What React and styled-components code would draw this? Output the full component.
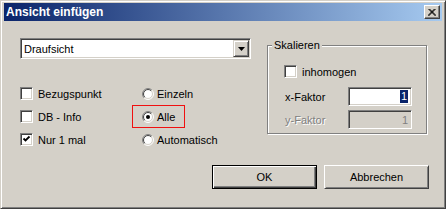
import React from "react";
import styled, { createGlobalStyle, css } from "styled-components";

const GlobalStyle = createGlobalStyle`
  html, body {
    margin: 0;
    padding: 0;
    background: #d4d0c8;
  }
  body {
    font-family: "Liberation Sans", Arial, sans-serif;
    font-size: 11px;
    color: #000;
  }
`;

const sunken = css`
  border: 1px solid;
  border-color: #808080 #fff #fff #808080;
  box-shadow: inset 1px 1px #404040, inset -1px -1px #d4d0c8;
`;

const Window = styled.div`
  box-sizing: border-box;
  width: 446px;
  height: 209px;
  display: flex;
  flex-direction: column;
  padding: 2px 3px 3px 3px;
  background: #d4d0c8;
  border: 1px solid;
  border-color: #d4d0c8 #404040 #404040 #d4d0c8;
  box-shadow: inset 1px 1px #fff, inset -1px -1px #808080;
`;

const TitleBar = styled.div`
  height: 18px;
  display: flex;
  align-items: center;
  justify-content: space-between;
  padding: 0 2px;
  background: linear-gradient(to right, #0a246a, #a6caf0);
`;

const TitleText = styled.span`
  color: #fff;
  font-weight: bold;
  font-size: 12px;
  line-height: 18px;
`;

const CloseButton = styled.div`
  box-sizing: border-box;
  width: 16px;
  height: 14px;
  display: flex;
  align-items: center;
  justify-content: center;
  background: #d4d0c8;
  border: 1px solid;
  border-color: #fff #404040 #404040 #fff;
  box-shadow: inset -1px -1px #808080;
`;

const Body = styled.div`
  flex: 1;
  display: flex;
  flex-direction: column;
  padding: 17px 13px 0 16px;
`;

const TopSection = styled.div`
  display: flex;
  gap: 16px;
`;

const LeftCol = styled.div`
  width: 231px;
  display: flex;
  flex-direction: column;
`;

const Combo = styled.div`
  box-sizing: border-box;
  height: 21px;
  display: flex;
  align-items: center;
  background: #fff;
  ${sunken};
  padding: 1px;
`;

const ComboText = styled.span`
  flex: 1;
  padding-left: 2px;
`;

const DropButton = styled.div`
  box-sizing: border-box;
  width: 16px;
  height: 17px;
  display: flex;
  align-items: center;
  justify-content: center;
  background: #d4d0c8;
  border: 1px solid;
  border-color: #d4d0c8 #404040 #404040 #d4d0c8;
  box-shadow: inset 1px 1px #fff, inset -1px -1px #808080;
`;

const OptionsGrid = styled.div`
  margin-top: 28px;
  display: grid;
  grid-template-columns: 122px 1fr;
  row-gap: 10px;
`;

const Option = styled.label`
  position: relative;
  height: 13px;
  display: flex;
  align-items: center;
  gap: ${(p) => (p.$radio ? "3px" : "5px")};
  white-space: nowrap;
  color: ${(p) => (p.$disabled ? "#808080" : "#000")};

  ${(p) =>
    p.$highlight &&
    css`
      &::after {
        content: "";
        position: absolute;
        box-sizing: border-box;
        left: -10px;
        top: -5px;
        width: 53px;
        height: 23px;
        border: 1px solid #f01010;
      }
    `}
`;

const CheckBox = styled.span`
  box-sizing: border-box;
  width: 13px;
  height: 13px;
  flex: none;
  display: flex;
  align-items: center;
  justify-content: center;
  background: #fff;
  ${sunken};
`;

const GroupBox = styled.div`
  position: relative;
  box-sizing: border-box;
  width: 160px;
  height: 89px;
  margin-top: 7px;
  padding: 19px 14px 0 16px;
  border: 1px solid #808080;
  box-shadow: inset 1px 1px #fff, 1px 1px #fff;
  display: flex;
  flex-direction: column;
`;

const GroupLabel = styled.span`
  position: absolute;
  top: -7px;
  left: 4px;
  padding: 0 2px;
  line-height: 13px;
  background: #d4d0c8;
`;

const FieldRow = styled.div`
  display: flex;
  align-items: center;
  height: 19px;
  margin-top: ${(p) => p.$gap}px;
`;

const FieldLabel = styled.span`
  width: 64px;
  padding-left: 1px;
  color: ${(p) => (p.$disabled ? "#808080" : "#000")};
  text-shadow: ${(p) => (p.$disabled ? "1px 1px #fff" : "none")};
`;

const Field = styled.div`
  box-sizing: border-box;
  width: 64px;
  height: 19px;
  display: flex;
  align-items: center;
  justify-content: flex-end;
  padding-right: 3px;
  background: ${(p) => (p.$disabled ? "#d4d0c8" : "#fff")};
  color: ${(p) => (p.$disabled ? "#808080" : "#000")};
  ${sunken};
`;

const Selected = styled.span`
  background: #0a246a;
  color: #fff;
  padding: 0 1px;
  line-height: 13px;
`;

const ButtonRow = styled.div`
  margin-top: 19px;
  display: flex;
  justify-content: flex-end;
  gap: 7px;
`;

const Button = styled.div`
  box-sizing: border-box;
  width: 105px;
  height: 24px;
  display: flex;
  align-items: center;
  justify-content: center;
  background: #d4d0c8;
  border: 1px solid;
  ${(p) =>
    p.$default
      ? css`
          border-color: #000;
          box-shadow: inset 1px 1px #fff, inset -1px -1px #404040,
            inset -2px -2px #808080;
        `
      : css`
          border-color: #fff #404040 #404040 #fff;
          box-shadow: inset 1px 1px #d4d0c8, inset -1px -1px #808080;
        `}
`;

function Radio({ checked }) {
  const c = 6;
  const arc = (r, color, first) => {
    const a = r * 0.7071;
    const p1 = `${c - a},${c + a}`;
    const p2 = `${c + a},${c - a}`;
    const d = first
      ? `M${p1} A${r} ${r} 0 0 1 ${p2}`
      : `M${p2} A${r} ${r} 0 0 1 ${p1}`;
    return <path d={d} fill="none" stroke={color} strokeWidth="1" />;
  };
  return (
    <svg width="12" height="12" viewBox="0 0 12 12" style={{ flex: "none" }}>
      <circle cx="6" cy="6" r="5" fill="#fff" />
      {arc(5.5, "#808080", true)}
      {arc(5.5, "#fff", false)}
      {arc(4.5, "#404040", true)}
      {arc(4.5, "#d4d0c8", false)}
      {checked && <circle cx="6" cy="6" r="2" fill="#000" />}
    </svg>
  );
}

function Check({ checked, label }) {
  return (
    <Option>
      <CheckBox>
        {checked && (
          <svg width="9" height="9" viewBox="0 0 9 9">
            <path d="M1.5 3.5 L3.5 5.5 L7.5 1.5" fill="none" stroke="#000" strokeWidth="1.8" />
          </svg>
        )}
      </CheckBox>
      {label}
    </Option>
  );
}

export default function App() {
  return (
    <>
      <GlobalStyle />
      <Window>
        <TitleBar>
          <TitleText>Ansicht einfügen</TitleText>
          <CloseButton>
            <svg width="8" height="7" viewBox="0 0 8 7">
              <path d="M0.5 0 L7.5 7 M1.5 0 L8 6.5 M7.5 0 L0.5 7 M6.5 0 L0 6.5" stroke="#000" strokeWidth="1" />
            </svg>
          </CloseButton>
        </TitleBar>
        <Body>
          <TopSection>
            <LeftCol>
              <Combo>
                <ComboText>Draufsicht</ComboText>
                <DropButton>
                  <svg width="7" height="4" viewBox="0 0 7 4">
                    <path d="M0 0 H7 L3.5 4 Z" fill="#000" />
                  </svg>
                </DropButton>
              </Combo>
              <OptionsGrid>
                <Check label="Bezugspunkt" />
                <Option $radio>
                  <Radio />
                  Einzeln
                </Option>
                <Check label="DB - Info" />
                <Option $radio $highlight>
                  <Radio checked />
                  Alle
                </Option>
                <Check checked label="Nur 1 mal" />
                <Option $radio>
                  <Radio />
                  Automatisch
                </Option>
              </OptionsGrid>
            </LeftCol>
            <GroupBox>
              <GroupLabel>Skalieren</GroupLabel>
              <Check label="inhomogen" />
              <FieldRow $gap={9}>
                <FieldLabel>x-Faktor</FieldLabel>
                <Field>
                  <Selected>1</Selected>
                </Field>
              </FieldRow>
              <FieldRow $gap={4}>
                <FieldLabel $disabled>y-Faktor</FieldLabel>
                <Field $disabled>1</Field>
              </FieldRow>
            </GroupBox>
          </TopSection>
          <ButtonRow>
            <Button $default>OK</Button>
            <Button>Abbrechen</Button>
          </ButtonRow>
        </Body>
      </Window>
    </>
  );
}
